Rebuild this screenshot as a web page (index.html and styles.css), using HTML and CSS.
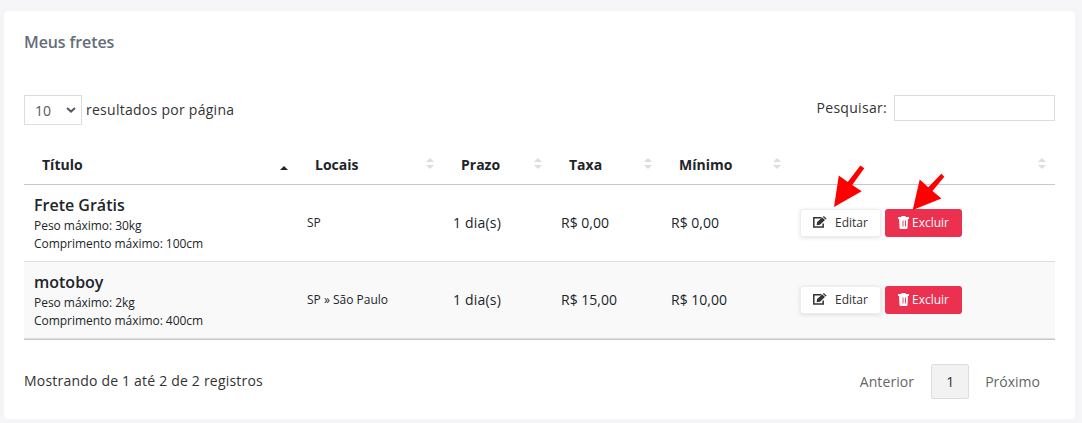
FILE: index.html
```html
<!DOCTYPE html>
<html lang="pt-BR">
<head>
    <meta charset="UTF-8">
    <meta name="viewport" content="width=device-width, initial-scale=1.0">
    <title>Meus fretes</title>
    <link rel="stylesheet" href="styles.css">
</head>
<body>
    <svg class="sprite" width="0" height="0">
        <symbol id="icon-edit" viewBox="0 0 14 12">
            <path d="M8.500 1.700H.8v9.300h9.400V7.600" fill="none" stroke="currentColor" stroke-width="1.500"/>
            <path d="M3.600 9.300l.5-3.300L9.200 1.400l2.800 2.600L7 8.800zM9.900 .9l.9-.8 2.900 2.600-1 .9z" fill="currentColor"/>
        </symbol>
        <symbol id="icon-trash" viewBox="0 0 11 13">
            <path d="M3.200 1L3.700 0h3.600l.5 1H11v2H0V1zM1 3h9l-.5 9q-.1 1-1 1h-6q-.9 0-1-1z" fill="currentColor"/>
            <path d="M5 4.500v6M7.500 4.500v6" stroke="#eb3050" stroke-width=".9"/>
        </symbol>
    </svg>

    <div class="card">
        <h1>Meus fretes</h1>

        <div class="toolbar">
            <label class="length">
                <span class="select">10
                    <svg width="10" height="6" viewBox="0 0 10 6"><path d="M1 1l4 3.6L9 1" fill="none" stroke="currentColor" stroke-width="2"/></svg>
                </span>
                <span class="length-text">resultados por página</span>
            </label>
            <label class="search"><span>Pesquisar:</span> <input type="text"></label>
        </div>

        <table>
            <colgroup>
                <col class="c-titulo"><col class="c-locais"><col class="c-prazo"><col class="c-taxa"><col class="c-minimo"><col>
            </colgroup>
            <thead>
                <tr>
                    <th class="asc">Título</th>
                    <th>Locais</th>
                    <th>Prazo</th>
                    <th>Taxa</th>
                    <th>Mínimo</th>
                    <th></th>
                </tr>
            </thead>
            <tbody>
                <tr>
                    <td class="titulo"><strong>Frete Grátis</strong><small>Peso máximo: 30kg</small><small>Comprimento máximo: 100cm</small></td>
                    <td class="locais">SP</td>
                    <td class="prazo">1 dia(s)</td>
                    <td>R$ 0,00</td>
                    <td>R$ 0,00</td>
                    <td class="acoes">
                        <div class="actions">
                            <button class="btn btn-edit"><svg width="14" height="12"><use href="#icon-edit"/></svg><span>Editar</span></button>
                            <button class="btn btn-delete"><svg width="11" height="13"><use href="#icon-trash"/></svg><span>Excluir</span></button>
                        </div>
                    </td>
                </tr>
                <tr>
                    <td class="titulo"><strong>motoboy</strong><small>Peso máximo: 2kg</small><small>Comprimento máximo: 400cm</small></td>
                    <td class="locais">SP » São Paulo</td>
                    <td class="prazo">1 dia(s)</td>
                    <td>R$ 15,00</td>
                    <td>R$ 10,00</td>
                    <td class="acoes">
                        <div class="actions">
                            <button class="btn btn-edit"><svg width="14" height="12"><use href="#icon-edit"/></svg><span>Editar</span></button>
                            <button class="btn btn-delete"><svg width="11" height="13"><use href="#icon-trash"/></svg><span>Excluir</span></button>
                        </div>
                    </td>
                </tr>
            </tbody>
        </table>

        <div class="footer">
            <span class="info">Mostrando de 1 até 2 de 2 registros</span>
            <div class="pages">
                <span class="prev">Anterior</span>
                <span class="current">1</span>
                <span class="next">Próximo</span>
            </div>
        </div>
    </div>

    <!-- setas sobre os botões -->
    <svg class="arrows" width="114" height="50" viewBox="832 163 114 50">
        <path d="M834 207l4.800-31.400 9 6.400 12.500-16.600 4 2.900L852.200 185l9.500 6.300z"/>
        <path d="M912.700 210l7-30.400 8.600 7.700 13-13.600 3 3.100L932.500 191l8.900 7.400z"/>
    </svg>
</body>
</html>
```

FILE: styles.css
```css
* {
    box-sizing: border-box;
}
body {
    margin: 0;
    height: 423px;
    overflow: hidden;
    background-color: #f6f6f9;
    font-family: "Open Sans", sans-serif;
    font-size: 14px;
    color: #212529;
}
.sprite {
    position: absolute;
}
.card {
    margin: 11px 7px 0 4px;
    height: 408px;
    padding: 20px 20px 0;
    background-color: white;
    border-radius: 4px;
    box-shadow: 0 0 8px rgba(82, 63, 105, 0.03);
}
h1 {
    margin: 0;
    height: 64px;
    font-size: 16px;
    font-weight: 600;
    line-height: 22px;
    letter-spacing: -0.1px;
    color: #646c7a;
}
.toolbar {
    display: flex;
    justify-content: space-between;
    align-items: flex-start;
    height: 51px;
    color: #333;
}
.length, .search {
    display: flex;
    align-items: center;
}
.length {
    gap: 4px;
}
.length-text {
    padding-bottom: 2px;
    letter-spacing: 0.27px;
}
.select {
    display: flex;
    align-items: center;
    justify-content: space-between;
    width: 58px;
    height: 30px;
    padding: 0 5px 0 10px;
    border: 1px solid #ddd;
    color: #575962;
}
.search {
    gap: 7px;
}
.search span {
    padding-bottom: 2px;
    letter-spacing: 0.3px;
}
.search input {
    width: 161px;
    height: 26px;
    padding: 0 4px;
    border: 1px solid #ddd;
    background-color: white;
}
table {
    width: 100%;
    table-layout: fixed;
    border-collapse: separate;
    border-spacing: 0;
    border-bottom: 1px solid #c8c8cc;
}
.c-titulo { width: 273px; }
.c-locais { width: 146px; }
.c-prazo { width: 108px; }
.c-taxa { width: 110px; }
.c-minimo { width: 129px; }
th {
    position: relative;
    height: 39px;
    padding: 0 18px 2px;
    border-bottom: 1px solid #c8c8c8;
    text-align: left;
    font-weight: 700;
}
th::before, th::after {
    content: "";
    position: absolute;
    right: 9px;
    border: 4px solid transparent;
}
th::before {
    top: 8px;
    border-bottom-color: #d9dee0;
}
th::after {
    top: 19px;
    border-top-color: #d9dee0;
}
th.asc::before {
    top: 16px;
    border-bottom-color: #212529;
}
th.asc::after {
    display: none;
}
td {
    height: 77px;
    padding: 0 10px 2px;
    border-bottom: 1px solid #ddd;
    vertical-align: middle;
}
.titulo, .acoes {
    padding-bottom: 0;
}
.prazo {
    letter-spacing: 0.2px;
}
tbody tr:nth-child(even) {
    background-color: #f9f9f9;
}
strong {
    display: block;
    margin-bottom: 1px;
    font-size: 16px;
    font-weight: 600;
    line-height: 22px;
}
small {
    display: block;
    font-size: 12px;
    line-height: 18px;
    letter-spacing: -0.04px;
}
.locais {
    font-size: 12px;
}
.actions {
    display: flex;
    gap: 4px;
}
.btn {
    display: flex;
    align-items: center;
    height: 28px;
    border: 0;
    border-radius: 3px;
    font-family: inherit;
    font-size: 12px;
}
.btn-edit {
    width: 81px;
    padding: 0 0 2px 12px;
    gap: 8px;
    border: 1px solid #eee;
    background-color: white;
    box-shadow: 0 1px 4px rgba(0, 0, 0, 0.12);
    color: #333;
}
.btn-delete {
    width: 77px;
    padding: 0 0 2px 13px;
    gap: 3px;
    background-color: #eb3050;
    color: white;
}
.footer {
    display: flex;
    justify-content: space-between;
    padding-top: 24px;
    color: #333;
}
.info {
    padding-top: 7px;
    letter-spacing: 0.2px;
}
.pages {
    display: flex;
    align-items: center;
    padding-right: 15px;
    gap: 17px;
    color: #666;
}
.prev {
    letter-spacing: 0.1px;
}
.next {
    margin-left: -1px;
}
.current {
    width: 38px;
    height: 35px;
    border: 1px solid #ddd;
    border-radius: 2px;
    background-color: #f2f2f2;
    line-height: 33px;
    text-align: center;
    color: #333;
}
.arrows {
    position: absolute;
    left: 832px;
    top: 163px;
    fill: #f00;
}
```
